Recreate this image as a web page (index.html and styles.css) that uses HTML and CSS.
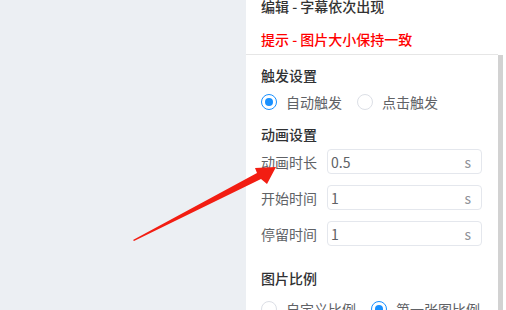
FILE: index.html
```html
<!DOCTYPE html>
<html lang="zh-CN">
<head>
    <meta charset="UTF-8">
    <meta name="viewport" content="width=device-width, initial-scale=1.0">
    <title>编辑 - 字幕依次出现</title>
    <link rel="stylesheet" href="styles.css">
</head>
<body>

    <div class="page">
        <!-- 左侧画布 -->
        <div class="canvas"></div>

        <!-- 右侧设置面板 -->
        <div class="panel">
            <div class="panel-head">
                <div class="panel-title">编辑 - 字幕依次出现</div>
                <div class="panel-tip">提示 - 图片大小保持一致</div>
            </div>

            <div class="panel-body">
                <div class="panel-content">
                    <div class="section-title">触发设置</div>
                    <div class="radio-group">
                        <label class="radio checked"><span class="radio-dot"></span>自动触发</label>
                        <label class="radio"><span class="radio-dot"></span>点击触发</label>
                    </div>

                    <div class="section-title anim-title">动画设置</div>
                    <div class="form-row">
                        <span class="form-label">动画时长</span>
                        <div class="input"><span class="input-value">0.5</span><span class="input-unit">s</span></div>
                    </div>
                    <div class="form-row">
                        <span class="form-label">开始时间</span>
                        <div class="input"><span class="input-value">1</span><span class="input-unit">s</span></div>
                    </div>
                    <div class="form-row">
                        <span class="form-label">停留时间</span>
                        <div class="input"><span class="input-value">1</span><span class="input-unit">s</span></div>
                    </div>

                    <div class="section-title ratio-title">图片比例</div>
                    <div class="radio-group ratio-group">
                        <label class="radio"><span class="radio-dot"></span>自定义比例</label>
                        <label class="radio checked"><span class="radio-dot"></span>第一张图比例</label>
                    </div>
                </div>
                <div class="scrollbar"></div>
            </div>
        </div>
    </div>

    <!-- 红色箭头标注 -->
    <svg class="arrow" width="506" height="310" viewBox="0 0 506 310">
        <polygon points="133,240 257,173 255,168 276,167 267,184 261,179 134,241" fill="#f21d12"/>
    </svg>

</body>
</html>
```

FILE: styles.css
```css
html, body {
    margin: 0;
    height: 100%;
}

body {
    font-family: "Noto Sans CJK SC", "Noto Sans", sans-serif;
    font-size: 14px;
    background-color: #eceff3;
    overflow: hidden;
}

.page {
    display: flex;
    height: 310px;
}

.canvas {
    flex: 1;
}

.panel {
    width: 260px;
    background: #fff;
    display: flex;
    flex-direction: column;
}

.panel-head {
    padding: 0 15px 5px 15px;
    width: 222px;
    border-bottom: 1px solid #e6e6e6;
}

.panel-title {
    line-height: 12px;
    color: #333;
    font-weight: 500;
}

.panel-tip {
    margin-top: 17px;
    line-height: 20px;
    color: #ff0000;
    font-weight: 500;
}

.panel-body {
    flex: 1;
    display: flex;
}

.panel-content {
    width: 237px;
    padding: 10px 0 0 15px;
}

.scrollbar {
    width: 5px;
    background: #d2d2d2;
}

.section-title {
    line-height: 20px;
    color: #303133;
    font-weight: 500;
}

.anim-title {
    margin-top: 12px;
}

.ratio-title {
    margin-top: 22px;
}

.radio-group {
    display: flex;
    gap: 15px;
    margin-top: 7px;
    line-height: 20px;
    color: #606266;
}

.ratio-group {
    margin-top: 11px;
}

.radio {
    display: flex;
    align-items: center;
    gap: 9px;
}

.radio-dot {
    box-sizing: border-box;
    width: 16px;
    height: 16px;
    border: 1px solid #dcdfe6;
    border-radius: 50%;
    display: flex;
    align-items: center;
    justify-content: center;
}

.radio.checked .radio-dot {
    border: 1.5px solid #1890ff;
}

.radio.checked .radio-dot::after {
    content: "";
    width: 8px;
    height: 8px;
    border-radius: 50%;
    background: #1890ff;
}

.form-row {
    display: flex;
    align-items: center;
    margin-top: 11px;
}

.anim-title + .form-row {
    margin-top: 5px;
}

.form-label {
    width: 66px;
    color: #606266;
}

.input {
    box-sizing: border-box;
    width: 155px;
    height: 25px;
    border: 1px solid #e4e7ed;
    border-radius: 4px;
    display: flex;
    align-items: center;
    justify-content: space-between;
    padding: 0 10px 0 3px;
}

.input-value {
    color: #606266;
}

.input-unit {
    color: #909399;
}

.arrow {
    position: absolute;
    left: 0;
    top: 0;
}
```
